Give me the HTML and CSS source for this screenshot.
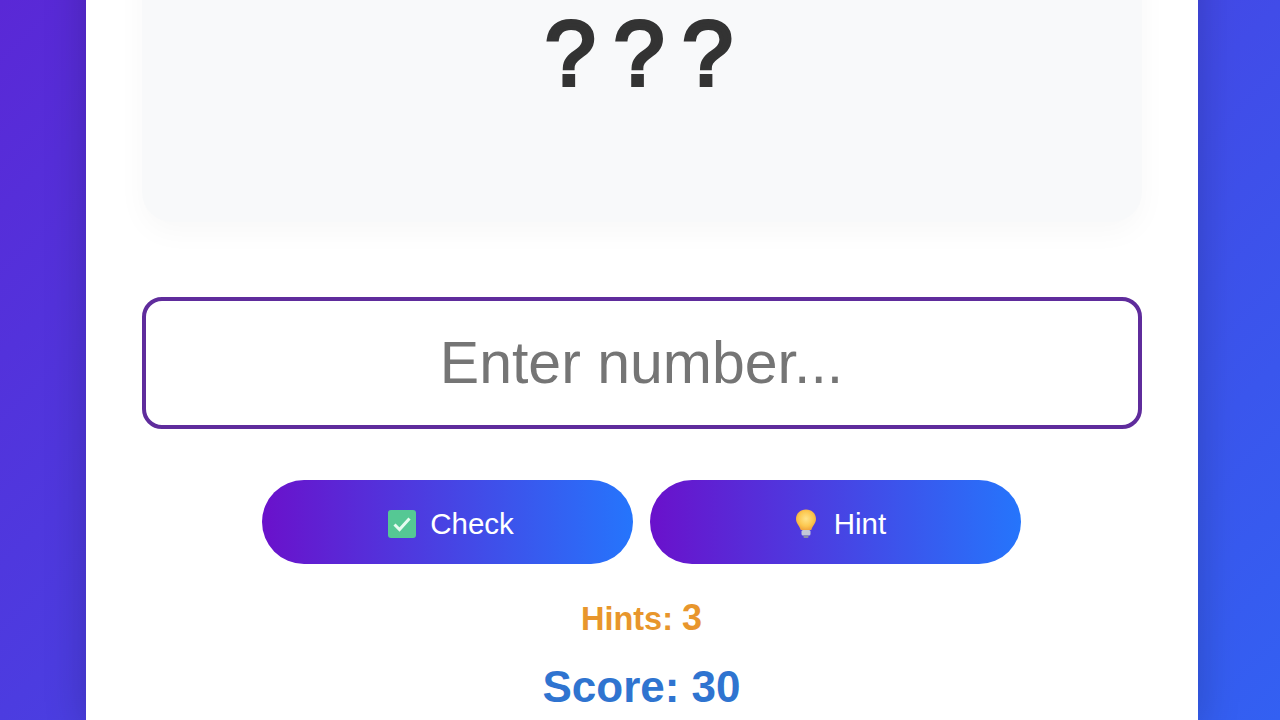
FILE: index.html
```html
<!DOCTYPE html>
<html lang="en">
<head>
    <meta charset="UTF-8">
    <meta name="viewport" content="width=device-width, initial-scale=1.0">
    <title>Guess the Number</title>
    <link rel="stylesheet" href="styles.css">
</head>
<body>
    <main class="game-card">
        <div class="number-box">
            <span class="secret-number">???</span>
        </div>

        <input class="guess-input" type="text" placeholder="Enter number...">

        <div class="actions">
            <button class="action-btn" type="button">
                <svg class="btn-icon" viewBox="0 0 30 30" aria-hidden="true">
                    <rect x="1" y="1" width="28" height="28" rx="3" fill="#55c894"/>
                    <path d="M7.500 15.500l5 5 10-11" fill="none" stroke="#e6fbf0" stroke-width="3"/>
                </svg>
                Check
            </button>
            <button class="action-btn" type="button">
                <svg class="btn-icon" viewBox="0 0 30 30" aria-hidden="true">
                    <defs>
                        <radialGradient id="bulbGlow" cx="0.5" cy="0.45" r="0.6">
                            <stop offset="0" stop-color="#ffe48a"/>
                            <stop offset="0.6" stop-color="#fcc850"/>
                            <stop offset="1" stop-color="#ee9f3a"/>
                        </radialGradient>
                    </defs>
                    <path d="M15 0.500c-5.800 0-10 4-10 9.500 0 4.500 3.500 6.500 4.700 11h10.600c1.200-4.500 4.700-6.500 4.700-11 0-5.500-4.200-9.500-10-9.500z" fill="url(#bulbGlow)"/>
                    <rect x="10.500" y="21" width="9" height="5.500" rx="1.500" fill="#c3c6d8"/>
                    <rect x="12.500" y="26.500" width="5" height="2.500" rx="1" fill="#8a8ca3"/>
                </svg>
                Hint
            </button>
        </div>

        <p class="hints">Hints: <span class="hints-count">3</span></p>
        <p class="score">Score: 30</p>
    </main>
</body>
</html>
```

FILE: styles.css
```css
body {
    overflow: hidden;
    margin: 0;
    height: 100vh;
    display: flex;
    justify-content: center;
    background: linear-gradient(135deg, #5a28d6 0%, #3360f2 100%);
    font-family: 'Liberation Sans', Arial, sans-serif;
}

.game-card {
    box-sizing: border-box;
    flex: 0 0 1111px;
    margin: -112px 0 0 3px;
    padding: 0 56px;
    height: 840px;
    background-color: #fff;
    box-shadow: 0 0 40px rgba(0, 0, 0, 0.2);
    text-align: center;
}

.number-box {
    box-sizing: border-box;
    height: 334px;
    padding: 0 0 2px 13px;
    display: flex;
    justify-content: center;
    align-items: center;
    background-color: #f8f9fa;
    border-radius: 30px;
    box-shadow: 0 10px 30px rgba(0, 0, 0, 0.03);
}

.secret-number {
    font-size: 91px;
    letter-spacing: 18px;
    -webkit-text-stroke: 4px #333;
    color: #333;
}

.guess-input {
    display: block;
    box-sizing: border-box;
    width: 1000px;
    height: 132px;
    margin: 75px 0 51px;
    border: 4px solid #5f2c9c;
    border-radius: 20px;
    background-color: #fff;
    font-family: inherit;
    font-size: 59px;
    text-align: center;
    outline: none;
}

.actions {
    display: flex;
    justify-content: center;
    gap: 17px;
}

.action-btn {
    width: 371px;
    height: 84px;
    padding: 4px 0 0 6px;
    display: flex;
    justify-content: center;
    align-items: center;
    gap: 13px;
    border: none;
    border-radius: 42px;
    background: linear-gradient(90deg, #6a11cb, #2575fc);
    color: #fff;
    font-family: inherit;
    font-size: 29.5px;
    cursor: pointer;
}

.btn-icon {
    width: 30px;
    height: 30px;
}

.hints {
    margin: 33px 0 0;
    font-size: 32.500px;
    font-weight: bold;
    color: #e8962c;
}

.hints-count {
    font-size: 36px;
}

.score {
    margin: 23px 0 0;
    font-size: 44px;
    font-weight: bold;
    color: #2f74d0;
}
```
